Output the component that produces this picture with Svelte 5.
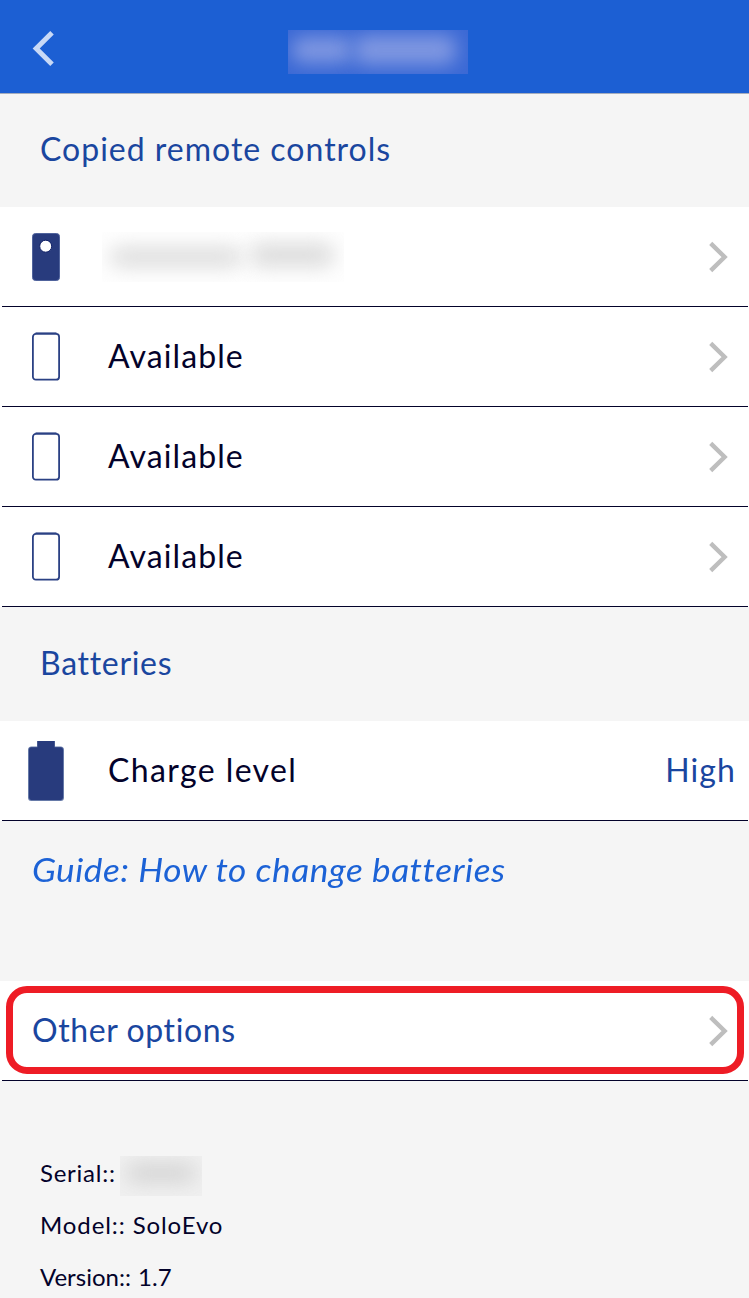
<script>
  const remotes = [
    { name: '', used: true },
    { name: 'Available', used: false },
    { name: 'Available', used: false },
    { name: 'Available', used: false }
  ];
</script>

{#snippet chevron()}
  <svg class="chevron" width="20" height="32" viewBox="0 0 20 32">
    <path d="M1.7 2.4 L15.6 16 L1.7 29.6" fill="none" stroke="#bebebe" stroke-width="4.4" />
  </svg>
{/snippet}

<main class="screen">
  <header class="topbar">
    <button class="back" aria-label="Back">
      <svg width="24" height="38" viewBox="0 0 24 38">
        <path d="M21 2.8 L5.2 18.5 L21 34.2" fill="none" stroke="#c8d9f6" stroke-width="5" />
      </svg>
    </button>
    <div class="title-mask"><span class="word first"></span><span class="word second"></span></div>
  </header>

  <h2 class="section-title">Copied remote controls</h2>
  <ul class="list">
    {#each remotes as remote}
      <li class="row">
        <span class="icon">
          {#if remote.used}
            <svg width="28" height="48" viewBox="0 0 28 48">
              <rect x="0.5" y="0.5" width="27" height="47" rx="3" fill="#283b7d" stroke="#50639c" />
              <circle cx="13.7" cy="13.2" r="6" fill="#fff" stroke="#102066" />
            </svg>
          {:else}
            <svg class="empty" width="28" height="49" viewBox="0 0 28 49">
              <path d="M3.5 0.8 H24.5" stroke="#7180ae" stroke-width="1.4" />
              <rect x="0.9" y="1.9" width="26.2" height="45.8" rx="3" fill="#fff" stroke="#2b4184" stroke-width="1.8" />
            </svg>
          {/if}
        </span>
        {#if remote.name}
          <span class="label available">{remote.name}</span>
        {:else}
          <span class="name-mask"><span class="word first"></span><span class="word second"></span></span>
        {/if}
        {@render chevron()}
      </li>
    {/each}
  </ul>

  <h2 class="section-title batteries">Batteries</h2>
  <div class="row">
    <span class="icon">
      <svg class="battery" width="38" height="60" viewBox="0 0 38 60">
        <path d="M10 0 H28 V5.5 H33.5 Q37 5.5 37 9 V56.5 Q37 60 33.5 60 H4.5 Q1 60 1 56.5 V9 Q1 5.5 4.5 5.5 H10 Z" fill="#667aa8" />
        <path d="M10.5 0 H27.5 V6.3 H33.5 Q36 6.3 36 9 V56 Q36 59 33.5 59 H4.5 Q2 59 2 56 V9 Q2 6.3 4.5 6.3 H10.5 Z" fill="#283b7d" />
      </svg>
    </span>
    <span class="label charge">Charge level</span>
    <span class="value">High</span>
  </div>
  <div class="guide"><span>Guide: How to change batteries</span></div>

  <div class="row options">
    <span class="label">Other options</span>
    {@render chevron()}
    <div class="highlight"></div>
  </div>

  <div class="info">
    <p class="serial">Serial:: <span class="serial-mask"><span class="word"></span></span></p>
    <p class="model">Model:: SoloEvo</p>
    <p class="version">Version:: 1.7</p>
  </div>
</main>

<style>
  :global(body) {
    margin: 0;
    background: #f5f5f5;
  }

  .screen {
    height: 1298px;
    overflow: hidden;
    background: #f5f5f5;
    font-family: Lato, "Open Sans", sans-serif;
    font-size: 32px;
    font-variant-ligatures: none;
    color: #03022a;
  }

  .topbar {
    display: flex;
    align-items: flex-start;
    height: 93px;
    background: #1c5fd3;
    border-bottom: 1px solid #a5adbd;
  }

  .back {
    display: block;
    width: 24px;
    height: 38px;
    margin: 30px 0 0 31px;
    padding: 0;
    border: 0;
    background: none;
  }

  .title-mask {
    display: flex;
    align-items: center;
    gap: 2px;
    width: 176px;
    height: 44px;
    margin: 30px 0 0 233px;
    padding: 0 0 0 4px;
    overflow: hidden;
    background: #3b69d5;
  }

  .title-mask .word {
    height: 26px;
    margin-top: -4px;
    border-radius: 10px;
    background: #7f97e1;
    filter: blur(9px);
  }

  .title-mask .first {
    width: 60px;
  }

  .title-mask .second {
    width: 102px;
    height: 30px;
  }

  .section-title {
    display: flex;
    align-items: center;
    box-sizing: border-box;
    height: 113px;
    margin: 0;
    padding: 0 0 4px 40px;
    color: #1a469f;
    font-size: 32px;
    font-weight: 400;
    letter-spacing: 1px;
  }

  .batteries {
    height: 114px;
    letter-spacing: 0.7px;
  }

  .list {
    margin: 0;
    padding: 0;
    list-style: none;
  }

  .row {
    display: flex;
    align-items: center;
    position: relative;
    box-sizing: border-box;
    height: 100px;
    padding: 0 20px 1px 0;
    background: linear-gradient(#03022a, #03022a) 2px 100% / calc(100% - 3px) 1px no-repeat #fff;
  }

  .icon {
    display: flex;
    justify-content: center;
    width: 92px;
    margin-right: 16px;
  }

  .battery {
    margin-top: 1px;
  }

  .empty {
    margin-bottom: 1px;
  }

  .chevron {
    margin-left: auto;
  }

  .label,
  .value {
    padding-bottom: 2px;
  }

  .available {
    letter-spacing: 1.1px;
  }

  .charge {
    letter-spacing: 1.4px;
  }

  .name-mask {
    display: flex;
    align-items: center;
    gap: 8px;
    width: 234px;
    height: 50px;
    margin-left: -6px;
    padding-left: 8px;
    overflow: hidden;
    background: #fefefe;
  }

  .name-mask .word {
    height: 18px;
    border-radius: 10px;
    background: #d9d9d9;
    filter: blur(10px);
  }

  .name-mask .first {
    width: 132px;
  }

  .name-mask .second {
    width: 84px;
    height: 22px;
    margin-top: -4px;
  }

  .value {
    margin-left: auto;
    margin-right: -7px;
    color: #1a469f;
    letter-spacing: 1.1px;
  }

  .guide {
    height: 160px;
    padding-left: 32px;
    box-sizing: border-box;
    line-height: 98px;
    color: #1c62d6;
    font-style: italic;
    letter-spacing: 0.45px;
  }

  /* the italic is drawn wider than the family's own */
  .guide span {
    display: inline-block;
    transform: scaleX(1.1);
    transform-origin: left;
  }

  .options {
    padding-left: 32px;
    color: #1a469f;
    letter-spacing: 0.6px;
  }

  .highlight {
    position: absolute;
    inset: 5px 5px 7px 6px;
    border: 7px solid #ee1c25;
    border-radius: 21px;
  }

  .info {
    padding: 65px 0 0 40px;
    font-size: 24px;
  }

  .info p {
    display: flex;
    align-items: center;
    height: 52px;
    margin: 0;
  }

  .serial {
    letter-spacing: 0.75px;
  }

  .model {
    letter-spacing: 0.9px;
  }

  .serial-mask {
    display: flex;
    align-items: center;
    justify-content: center;
    width: 82px;
    height: 40px;
    margin: 8px 0 0 4px;
    overflow: hidden;
    background: #f0f0f0;
  }

  .serial-mask .word {
    width: 70px;
    height: 18px;
    margin-top: -6px;
    border-radius: 9px;
    background: #d2d2d2;
    filter: blur(10px);
  }

  .version {
    word-spacing: 1px;
  }
</style>
